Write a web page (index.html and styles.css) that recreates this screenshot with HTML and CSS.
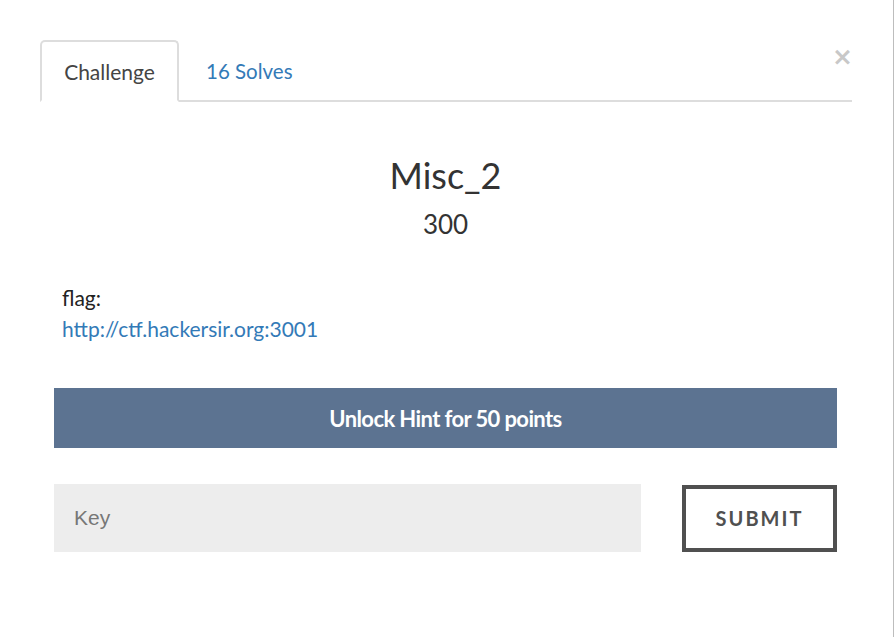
FILE: index.html
```html
<!DOCTYPE html>
<html>
<head>
<meta charset="utf-8">
<link rel="stylesheet" href="styles.css">
</head>
<body>
<div class="modal">
  <div class="header">
    <ul class="tabs">
      <li class="tab active">Challenge</li>
      <li class="tab link">16 Solves</li>
    </ul>
    <span class="close">&times;</span>
  </div>
  <div class="content">
    <h2 class="title">Misc_2</h2>
    <h3 class="value">300</h3>
    <div class="desc">
      <p>flag:<br><a href="#">http://ctf.hackersir.org:3001</a></p>
    </div>
    <div class="hint">Unlock Hint for 50 points</div>
    <div class="submit-row">
      <input class="key" type="text" placeholder="Key">
      <button class="submit">SUBMIT</button>
    </div>
  </div>
</div>
</body>
</html>
```
FILE: styles.css
```css
html, body {
  margin: 0;
  padding: 0;
  background: #fff;
  overflow: hidden;
}
body {
  font-family: Lato, "Open Sans", sans-serif;
  color: #333;
}
.modal {
  width: 894px;
  height: 637px;
  border-right: 1px solid #bdbdbd;
  box-sizing: border-box;
  padding-top: 40px;
}
.header {
  position: relative;
  margin: 0 41px 0 40px;
}
.tabs {
  list-style: none;
  margin: 0;
  padding: 0;
  display: flex;
  border-bottom: 2px solid #ddd;
}
.tab {
  font-size: 21px;
  height: 60px;
  line-height: 62px;
  padding: 0 22px;
  margin-bottom: -2px;
  box-sizing: border-box;
}
.tab.active {
  width: 139px;
  height: 62px;
  line-height: 60px;
  border: 2px solid #ddd;
  border-bottom: 2px solid #fff;
  border-radius: 5px 5px 0 0;
  color: #444;
  text-align: center;
  padding: 0;
}
.tab.link {
  color: #337ab7;
  padding: 0 27px;
  font-size: 20.5px;
}
.close {
  position: absolute;
  right: -1px;
  top: 3px;
  font-family: "DejaVu Sans", sans-serif;
  font-size: 25px;
  font-weight: bold;
  color: #c8c8c8;
  line-height: 28px;
}
.content {
  margin: 0 56px 0 54px;
}
.title {
  margin: 50px 0 0;
  text-align: center;
  font-size: 36px;
  font-weight: 400;
  line-height: 46px;
  color: #333;
}
.value {
  margin: 9px 0 0;
  text-align: center;
  font-size: 26px;
  font-weight: 400;
  line-height: 34px;
  color: #333;
}
.desc {
  margin-top: 41px;
  padding-left: 8px;
}
.desc p {
  margin: 0;
  font-size: 21px;
  line-height: 31px;
  color: #222;
}
.desc a {
  color: #337ab7;
  text-decoration: none;
}
.hint {
  margin-top: 44px;
  height: 60px;
  background: #5c7391;
  color: #fff;
  font-weight: 700;
  font-size: 22px;
  letter-spacing: -0.6px;
  display: flex;
  align-items: center;
  justify-content: center;
}
.submit-row {
  display: flex;
  justify-content: space-between;
  align-items: center;
  margin-top: 36px;
}
.key {
  width: 587px;
  height: 68px;
  box-sizing: border-box;
  border: none;
  background: #ededed;
  padding: 0 20px;
  font-family: "Liberation Sans", Arial, sans-serif;
  font-size: 21px;
  outline: none;
}
.key::placeholder {
  color: #777;
}
.submit {
  width: 155px;
  height: 67px;
  box-sizing: border-box;
  border: 4px solid #505050;
  background: #fff;
  color: #505050;
  font-family: Lato, sans-serif;
  font-weight: 700;
  font-size: 20px;
  letter-spacing: 2px;
  padding: 0;
}
```
